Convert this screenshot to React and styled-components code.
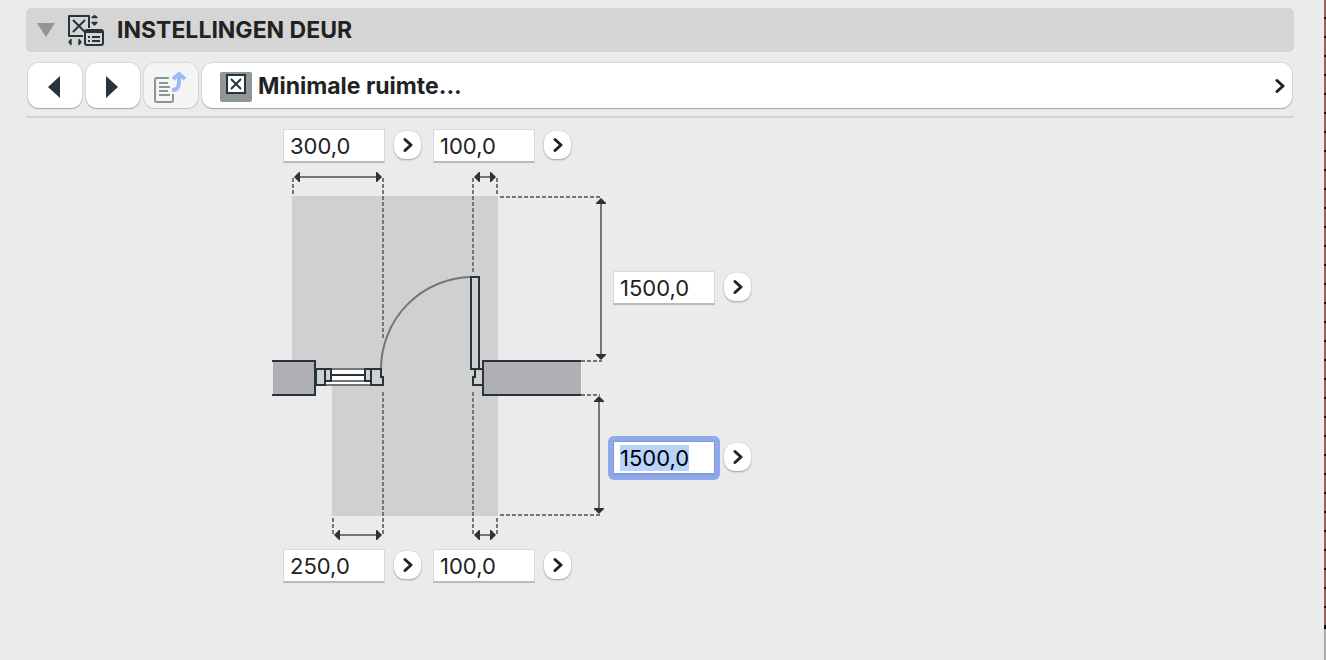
import React, { useEffect, useRef } from "react";

import styled, { createGlobalStyle } from "styled-components";

const GlobalStyle = createGlobalStyle`
  * {
    box-sizing: border-box;
  }

  body {
    margin: 0;
    background-color: #ebebeb;
    color: #222;
    font-family: Inter, "Liberation Sans", sans-serif;
    font-size: 22px;
    line-height: 28px;
  }

  button,
  input {
    font: inherit;
    color: inherit;
  }

  svg {
    display: block;
    flex: none;
  }
`;

const Page = styled.div`
  display: flex;
  min-height: 100vh;
`;

const Panel = styled.main`
  flex: 1;
  min-width: 0;
  padding: 8px 30px 0 26px;
`;

const BrickEdge = styled.div`
  width: 2px;
  display: flex;
  flex-direction: column;

  &::before {
    content: "";
    height: 627px;
    background: repeating-linear-gradient(#96645f 0 17px, #1c0f0e 17px 19px);
    border-bottom: 2px solid #000;
  }

  &::after {
    content: "";
    flex: 1;
    background-color: #a9a9a9;
  }
`;

const Header = styled.header`
  display: flex;
  align-items: center;
  height: 44px;
  padding-left: 11px;
  border-radius: 5px;
  background-color: #d5d5d5;
`;

const FoldButton = styled.button`
  padding: 0;
  border: 0;
  background: none;
`;

const Title = styled.h1`
  display: flex;
  align-items: center;
  gap: 12px;
  margin: 0 0 0 12px;
  font-size: 23px;
  font-weight: 700;
`;

const Toolbar = styled.div`
  display: flex;
  gap: 4px;
  padding: 11px 2px 8px;
  border-bottom: 2px solid #d2d2d2;
`;

const ToolButton = styled.button`
  display: flex;
  align-items: center;
  justify-content: center;
  width: 54px;
  height: 45px;
  padding: 2px 2px 0 0;
  border: 0;
  border-radius: 11px;
  background-color: ${props => props.disabled ? '#f5f5f5' : '#fff'};
  box-shadow: 0 0 1px 1px rgba(0, 0, 0, 0.08), 0 1px 1px rgba(0, 0, 0, ${props => props.disabled ? '0.1' : '0.25'});
`;

const PageButton = styled(ToolButton)`
  flex: 1;
  justify-content: flex-start;
  gap: 6px;
  padding: 0 7px 0 18px;
  font-size: 23px;
  font-weight: 700;

  span {
    flex: 1;
    text-align: left;
  }
`;

const Form = styled.form`
  display: grid;
  grid-template-columns: 341px max-content;
  row-gap: 7px;
  margin-left: 246px;
  padding-top: 11px;
`;

const FieldRow = styled.div`
  grid-column: 1;
  display: flex;
  gap: 12px;
  padding-left: 11px;
`;

const FieldColumn = styled.div`
  grid-column: 2;
  display: flex;
  flex-direction: column;
  gap: 136px;
  padding-top: 101px;
`;

const FieldGroup = styled.div`
  display: flex;
  align-items: center;
  gap: 9px;
`;

const Input = styled.input`
  width: 102px;
  height: 34px;
  padding: 0 6px;
  border: 1px solid #dadada;
  border-bottom: 2px solid #b9b9b9;
  border-radius: 0;
  outline: none;
  background-color: #fff;

  &:focus {
    border-color: #8299d6;
    border-radius: 2px;
    box-shadow: 0 0 0 5px #8fa8ea;
    color: #000;
  }

  &::selection {
    background-color: #b8d4fd;
    color: #000;
  }
`;

const MoreButton = styled.button`
  display: flex;
  align-items: center;
  justify-content: center;
  width: 27px;
  height: 28px;
  margin-bottom: 2px;
  padding: 0 0 0 1px;
  border: 0;
  border-radius: 11px;
  background-color: #fff;
  box-shadow: 0 0 1px rgba(0, 0, 0, 0.2), 0 1px 2px rgba(0, 0, 0, 0.3);
`;

const Chevron = () => (
  <svg width="10" height="16" viewBox="0 0 10 16" fill="none" stroke="#222" strokeWidth="3" strokeLinecap="round" strokeLinejoin="round">
    <path d="M2 2.5 8 8 2 13.5" />
  </svg>
);

const DoorSettingsIcon = () => (
  <svg width="38" height="34" viewBox="0 0 38 34" fill="none" stroke="#28343b" strokeWidth="2">
    <path d="M16 23H2V3H22V15" strokeLinejoin="round" />
    <path d="M6 7 18 19M18 7 6 19" />
    <rect x="18" y="17" width="18" height="15" rx="2" />
    <path d="M18 18.5H36" strokeWidth="3" />
    <path d="M21 24h2M21 28h2M25 24h8M25 28h8" />
    <path d="M25 4.5 27.5 2.5 30 4.5ZM25 9.5 27.5 12 30 9.5ZM4 26.5 2 29 4 31.5ZM12 26.5 14 29 12 31.5Z" fill="#28343b" strokeWidth="1.4" strokeLinejoin="round" />
  </svg>
);

const TransferIcon = () => (
  <svg width="34" height="34" viewBox="0 0 34 34" fill="none" stroke="#8e9497" strokeWidth="2">
    <path d="M16 8H4Q2 8 2 10V30Q2 32 4 32H18Q20 32 20 30V24" />
    <path d="M6 13h9M6 17h11M6 21h9M6 25h11" />
    <path d="M19 20Q26 20 26 12V5M20 9 26 4 32 9" stroke="#9db9f9" strokeWidth="4" />
  </svg>
);

const SpaceIcon = () => (
  <svg width="32" height="33" viewBox="0 -3 32 33">
    <rect width="32" height="30" rx="2" fill="#8f9699" />
    <rect x="7" y="3" width="18" height="18" fill="#fff" stroke="#28343b" strokeWidth="2" />
    <path d="M11 7 21 17M21 7 11 17" stroke="#28343b" strokeWidth="2" />
  </svg>
);

const Drawing = styled.svg`
  grid-column: 1;

  .area { fill: #d0d0d0; }
  .wall { fill: #b0afb4; }
  .glass { fill: #fff; }
  .guide, .measure, .swing { fill: none; stroke: #737675; stroke-width: 2; }
  .guide { stroke-dasharray: 4 2; }
  .frame { fill: none; stroke: #28343b; stroke-width: 2; }
  .leaf { fill: #d0d0d0; stroke: #28343b; stroke-width: 2; }
  .arrow { fill: #28343b; }
`;

const Arrow = ({ x, y, turn = 0 }) => (
  <path className="arrow" d="M0 0 5-5H6V5H5Z" transform={`translate(${x} ${y}) rotate(${turn})`} />
);

const DoorPlan = () => (
  <Drawing width="341" height="372" viewBox="272 170 341 372" role="img" aria-label="Minimale ruimte rond de deur">
    <path className="area" d="M292 196H498V516H332V378H292Z" />
    <path className="guide" d="M293 178V196M383 178V338M473 178V273M497 178V196" />
    <path className="guide" d="M383 392V534M473 392V534M333 518V534M497 518V534" />
    <path className="guide" d="M500 197H602M581 361H602M581 395H600M500 515H600" />
    <path className="measure" d="M299 177H378M479 177H491M339 535H378M479 535H491M601 203V355M599 401V509" />
    <Arrow x={294} y={177} />
    <Arrow x={382} y={177} turn={180} />
    <Arrow x={474} y={177} />
    <Arrow x={496} y={177} turn={180} />
    <Arrow x={334} y={535} />
    <Arrow x={382} y={535} turn={180} />
    <Arrow x={474} y={535} />
    <Arrow x={496} y={535} turn={180} />
    <Arrow x={601} y={198} turn={90} />
    <Arrow x={601} y={360} turn={270} />
    <Arrow x={599} y={396} turn={90} />
    <Arrow x={599} y={514} turn={270} />
    <path className="wall" d="M273 361H315V395H273ZM483 361H581V395H483Z" />
    <path className="glass" d="M326 369H371V385H326Z" />
    <path className="measure" d="M331 369H365M331 381H365M326 385H371" />
    <path className="swing" d="M381 369A92 92 0 0 1 471 277" />
    <path className="leaf" d="M316 369H325V385H316ZM325 369H331V381H325ZM365 369H371V381H365ZM371 369H381V377H383V385H371Z" />
    <path className="frame" d="M331 375H365" />
    <path className="leaf" d="M471 277H479V369H471ZM483 369H475V377H473V385H483Z" />
    <path className="frame" d="M272 361H315V395H272M581 361H483V395H581" />
  </Drawing>
);

const Field = ({ label, value, inputRef }) => (
  <FieldGroup>
    <Input ref={inputRef} type="text" aria-label={label} defaultValue={value} />
    <MoreButton type="button" aria-label={`Opties ${label}`}><Chevron /></MoreButton>
  </FieldGroup>
);

const App = () => {
  const activeField = useRef(null);

  useEffect(() => {
    activeField.current.focus();
    activeField.current.select();
  }, []);

  return (
    <Page>
      <GlobalStyle />
      <Panel>
        <Header>
          <FoldButton type="button" aria-label="Inklappen">
            <svg width="18" height="14" viewBox="0 0 18 14">
              <path d="M0 0H18L9 14Z" fill="#8f9699" />
            </svg>
          </FoldButton>
          <Title><DoorSettingsIcon />INSTELLINGEN DEUR</Title>
        </Header>
        <Toolbar>
          <ToolButton type="button" aria-label="Vorige">
            <svg width="12" height="22" viewBox="0 0 12 22"><path d="M12 0V22L0 11Z" fill="#28343b" /></svg>
          </ToolButton>
          <ToolButton type="button" aria-label="Volgende">
            <svg width="12" height="22" viewBox="0 0 12 22"><path d="M0 0V22L12 11Z" fill="#28343b" /></svg>
          </ToolButton>
          <ToolButton type="button" aria-label="Overnemen" disabled><TransferIcon /></ToolButton>
          <PageButton type="button">
            <SpaceIcon />
            <span>Minimale ruimte...</span>
            <Chevron />
          </PageButton>
        </Toolbar>
        <Form>
          <FieldRow>
            <Field label="Links boven" value="300,0" />
            <Field label="Rechts boven" value="100,0" />
          </FieldRow>
          <DoorPlan />
          <FieldColumn>
            <Field label="Diepte boven" value="1500,0" />
            <Field label="Diepte onder" value="1500,0" inputRef={activeField} />
          </FieldColumn>
          <FieldRow>
            <Field label="Links onder" value="250,0" />
            <Field label="Rechts onder" value="100,0" />
          </FieldRow>
        </Form>
      </Panel>
      <BrickEdge />
    </Page>
  );
};

export default App;
